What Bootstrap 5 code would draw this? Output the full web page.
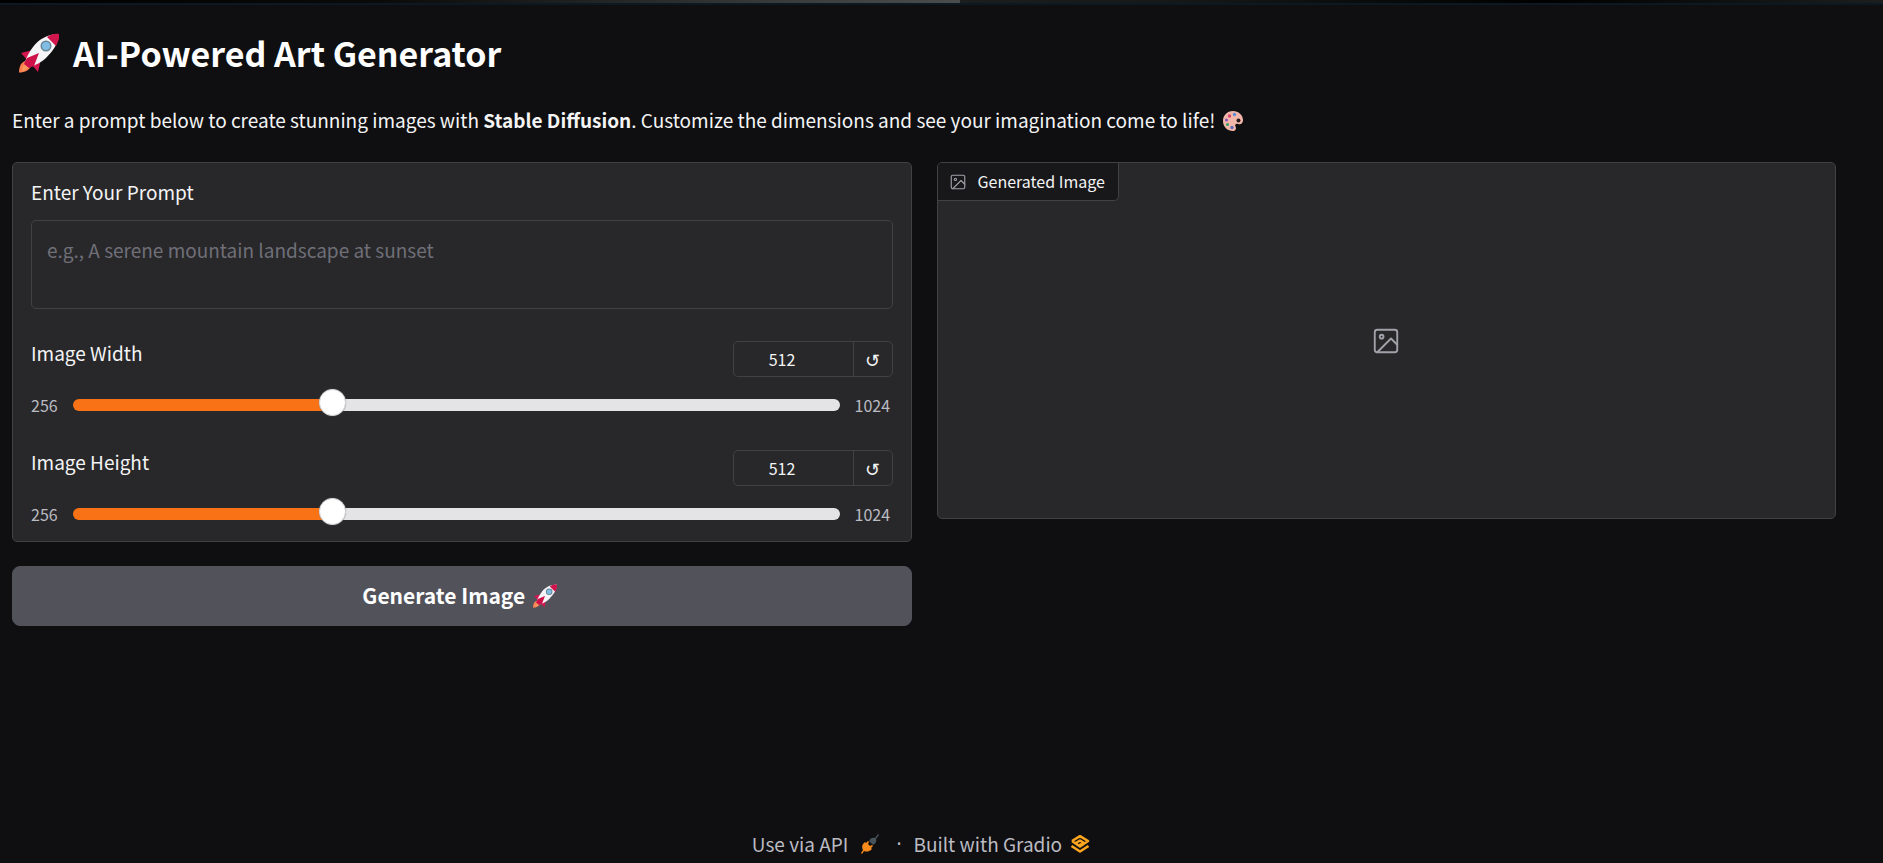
<!DOCTYPE html>
<html lang="en" data-bs-theme="dark">
<head>
<meta charset="utf-8">
<meta name="viewport" content="width=device-width, initial-scale=1">
<title>AI-Powered Art Generator</title>
<link href="https://cdn.jsdelivr.net/npm/bootstrap@5.3.0/dist/css/bootstrap.min.css" rel="stylesheet">
<style>
  :root { --page: #0f0f11; --panel: #28282a; --line: #414144; --ink: #f4f4f5; --dim: #bbbbc2; --accent: #f97316; }
  body { background: var(--page); color: var(--ink); font-family: "Noto Sans CJK SC", "Noto Sans", sans-serif; font-size: 19px; line-height: 28px; }
  .window-edge { height: 5px; border-bottom: 2px solid #0d1922; background: linear-gradient(90deg, #000 0, #0a0a0a 20%, #1e1f20 30%, #3a3c3e 42%, #4a4c4e 51%, #1b1e1f 51%, #16191a 62%, #000 82%, #1c1e20 100%); }
  .app-main { padding: 27px 47px 0 12px; }
  .app-title { font-size: 34px; line-height: 42px; font-weight: 700; margin-bottom: 32px; gap: 14px; padding-left: 7px; }
  .intro { margin-bottom: 28px; }
  .intro svg { vertical-align: -4px; margin-left: 2px; }
  .row-wide { --bs-gutter-x: 25px; }
  .panel { background: var(--panel); border: 1px solid var(--line); border-radius: 5px; }
  .form-panel { padding: 15px 18px; }
  .prompt-box, .prompt-box:focus { background: var(--panel); border: 1px solid var(--line); border-radius: 5px; color: var(--ink); font-size: 19px; line-height: 28px; padding: 15px; height: 89px; resize: none; box-shadow: none; }
  .prompt-box::placeholder { color: #6f6f78; opacity: 1; }
  .prompt-label { margin-bottom: 14px; }
  .slider-label { line-height: 24px; }
  .num-group { width: 160px; height: 36px; border: 1px solid var(--line); border-radius: 5px; }
  .num-group input { min-width: 0; background: transparent; border: 0; color: var(--ink); text-align: center; font-size: 16px; line-height: 24px; padding: 0 22px 0 0; appearance: textfield; -moz-appearance: textfield; }
  .num-group input::-webkit-inner-spin-button { -webkit-appearance: none; margin: 0; }
  .num-group button { width: 39px; flex: none; background: transparent; border: 0; border-left: 1px solid var(--line); color: var(--ink); padding: 0; font-size: 18px; line-height: 24px; }
  .bound { font-size: 16px; line-height: 24px; color: var(--dim); }
  .bound-max { width: 38px; }
  .track { appearance: none; -webkit-appearance: none; height: 12px; min-width: 0; margin: 0; border-radius: 6px; background: linear-gradient(90deg, var(--accent) var(--fill), #e4e4e7 var(--fill)); }
  .track::-webkit-slider-thumb { -webkit-appearance: none; width: 27px; height: 27px; margin-top: -5px; border-radius: 50%; background: #fff; border: 1px solid #d5d5d8; box-shadow: 0 0 1px #888; }
  .track::-moz-range-thumb { width: 25px; height: 25px; border-radius: 50%; background: #fff; border: 1px solid #d5d5d8; }
  .slider-line { gap: 15px; margin-top: 16px; }
  .slider-block + .slider-block { margin-top: 33px; }
  .generate { --bs-btn-bg: #52525b; --bs-btn-color: #fff; --bs-btn-border-color: #52525b; --bs-btn-hover-bg: #5d5d66; --bs-btn-hover-color: #fff; height: 60px; padding-right: 16px; border-radius: 8px; font-size: 21px; font-weight: 700; margin-top: 24px; }
  .image-panel { height: 357px; }
  .tag { background: #18181b; border-right: 1px solid var(--line); border-bottom: 1px solid var(--line); border-radius: 4px 0 5px 0; font-size: 16px; line-height: 37px; padding: 0 13px 0 11px; gap: 11px; }
  .pic { fill: none; stroke: #a1a1aa; stroke-width: 1.5; stroke-linecap: round; stroke-linejoin: round; }
  .app-foot { color: var(--dim); padding: 0 47px 5px 6px; }
  .app-foot a { color: inherit; text-decoration: none; }
  .dot-sep { font-family: "Noto Sans", sans-serif; margin: 0 12px 0 16px; }
</style>
</head>
<body class="d-flex flex-column min-vh-100">
<svg class="d-none" aria-hidden="true">
  <symbol id="rocket" viewBox="0 0 40 40">
    <path d="M7 28C3 28 0 33 0 39.500C6 39.500 11 37 11.500 33Z" fill="#ff7f50"/>
    <path d="M3 38C3 34 5 31 8 31L9.500 33C9 36 6 38 3 38Z" fill="#f8995e"/>
    <path d="M2 20L14 17L22 26L19 39L13 32L8 27Z" fill="#d5174f"/>
    <path d="M40 1C28 1 19 7 14 14C10 19 7 26 6 29L11 34C17 32 23 29 27 25C34 18 39 11 40 1Z" fill="#f5f4f6"/>
    <path d="M40 1C35 0 31 2 28 4L37 13C39 9 41 5 40 1Z" fill="#d0164c"/>
    <path d="M20 20L8 25C6 28 6 29 5 31L10 35L15 33Z" fill="#ce1149"/>
    <circle cx="27" cy="13" r="5.500" fill="#678593"/><circle cx="27" cy="13" r="4" fill="#80bee5"/>
  </symbol>
  <symbol id="picture" viewBox="0 0 24 24"><rect x="3" y="3" width="18" height="18" rx="2"/><circle cx="8.500" cy="8.500" r="1.500"/><path d="M21 15l-5-5L5 21"/></symbol>
</svg>

<div class="window-edge"></div>

<main class="app-main flex-grow-1">
  <h1 class="app-title d-flex align-items-center"><svg width="40" height="40" role="img" aria-label="Rocket"><use href="#rocket"/></svg>AI-Powered Art Generator</h1>
  <p class="intro">Enter a prompt below to create stunning images with <strong>Stable Diffusion</strong>. Customize the dimensions and see your imagination come to life!
    <svg width="22" height="22" viewBox="0 0 22 22" role="img" aria-label="Palette"><path d="M11 1C5 1 1 5.500 1 11C1 17 5.500 21 11 21C14 21 14.500 18.500 13.500 16.500C12.500 14.500 14 13.500 16 14C19 15 21 13 21 10C21 5 16.500 1 11 1Z" fill="#f2b7aa"/><circle cx="16.500" cy="10.500" r="2" fill="#26191b"/><circle cx="12.500" cy="4.500" r="1.700" fill="#5c8ed8"/><circle cx="7.500" cy="6" r="1.700" fill="#d8446a"/><circle cx="4.500" cy="10" r="1.600" fill="#8f55b5"/><circle cx="5.500" cy="14.500" r="1.600" fill="#3f9f6a"/><circle cx="10" cy="17.500" r="1.700" fill="#5c6bc0"/></svg>
  </p>

  <div class="row row-wide">
    <section class="col-6">
      <div class="panel form-panel">
        <label for="prompt" class="d-block prompt-label">Enter Your Prompt</label>
        <textarea id="prompt" class="form-control prompt-box mb-4" placeholder="e.g., A serene mountain landscape at sunset"></textarea>

        <div class="slider-block pt-2">
          <div class="d-flex justify-content-between align-items-start">
            <label for="width" class="slider-label">Image Width</label>
            <div class="num-group d-flex"><input type="number" class="flex-grow-1" value="512" min="256" max="1024" aria-label="Image width value"><button type="button" aria-label="Reset width">↺</button></div>
          </div>
          <div class="slider-line d-flex align-items-center">
            <span class="bound">256</span>
            <input type="range" id="width" class="track flex-grow-1" min="256" max="1024" value="512" style="--fill:33.3%">
            <span class="bound bound-max">1024</span>
          </div>
        </div>

        <div class="slider-block">
          <div class="d-flex justify-content-between align-items-start">
            <label for="height" class="slider-label">Image Height</label>
            <div class="num-group d-flex"><input type="number" class="flex-grow-1" value="512" min="256" max="1024" aria-label="Image height value"><button type="button" aria-label="Reset height">↺</button></div>
          </div>
          <div class="slider-line d-flex align-items-center">
            <span class="bound">256</span>
            <input type="range" id="height" class="track flex-grow-1" min="256" max="1024" value="512" style="--fill:33.3%">
            <span class="bound bound-max">1024</span>
          </div>
        </div>
      </div>
      <button type="button" class="btn generate w-100 d-flex align-items-center justify-content-center gap-2">Generate Image <svg width="24" height="24" aria-hidden="true"><use href="#rocket"/></svg></button>
    </section>

    <section class="col-6">
      <div class="panel image-panel position-relative d-flex align-items-center justify-content-center">
        <div class="tag position-absolute top-0 start-0 d-flex align-items-center"><svg class="pic" width="18" height="18" aria-hidden="true"><use href="#picture"/></svg>Generated Image</div>
        <svg class="pic" width="30" height="30" role="img" aria-label="No image yet"><use href="#picture"/></svg>
      </div>
    </section>
  </div>
</main>

<footer class="app-foot d-flex justify-content-center align-items-center">
  <a href="#" class="d-flex align-items-center gap-2">Use via API
    <svg class="ms-1" width="20" height="20" viewBox="0 0 20 20" aria-hidden="true"><path d="M1 19L3 16C1 12 3 10 5 8L6 9L8 7L9 8L8 10L10 12L12 11L13 12L11 14L12 15C9 18 6 18 4 17L2 20Z" fill="#f98a1c"/><path d="M9 7C10 4 13 3 15 4L18 0L19 1L16 5C17 8 15 10 13 11Z" fill="#47535a"/></svg>
  </a>
  <span class="dot-sep">·</span>
  <a href="#" class="d-flex align-items-center gap-2">Built with Gradio
    <svg width="20" height="20" viewBox="0 0 20 20" fill="none" stroke="#ffa51f" stroke-width="2.600" stroke-linejoin="round" aria-hidden="true"><path d="M9 11.500L14 9L10 6.500L5 9.500M2 7L10 2.200L18 7L10 12.500L2 7M1.500 12L10 17.500L18.500 12"/></svg>
  </a>
</footer>
<script src="https://cdn.jsdelivr.net/npm/bootstrap@5.3.0/dist/js/bootstrap.bundle.min.js"></script>
</body>
</html>
